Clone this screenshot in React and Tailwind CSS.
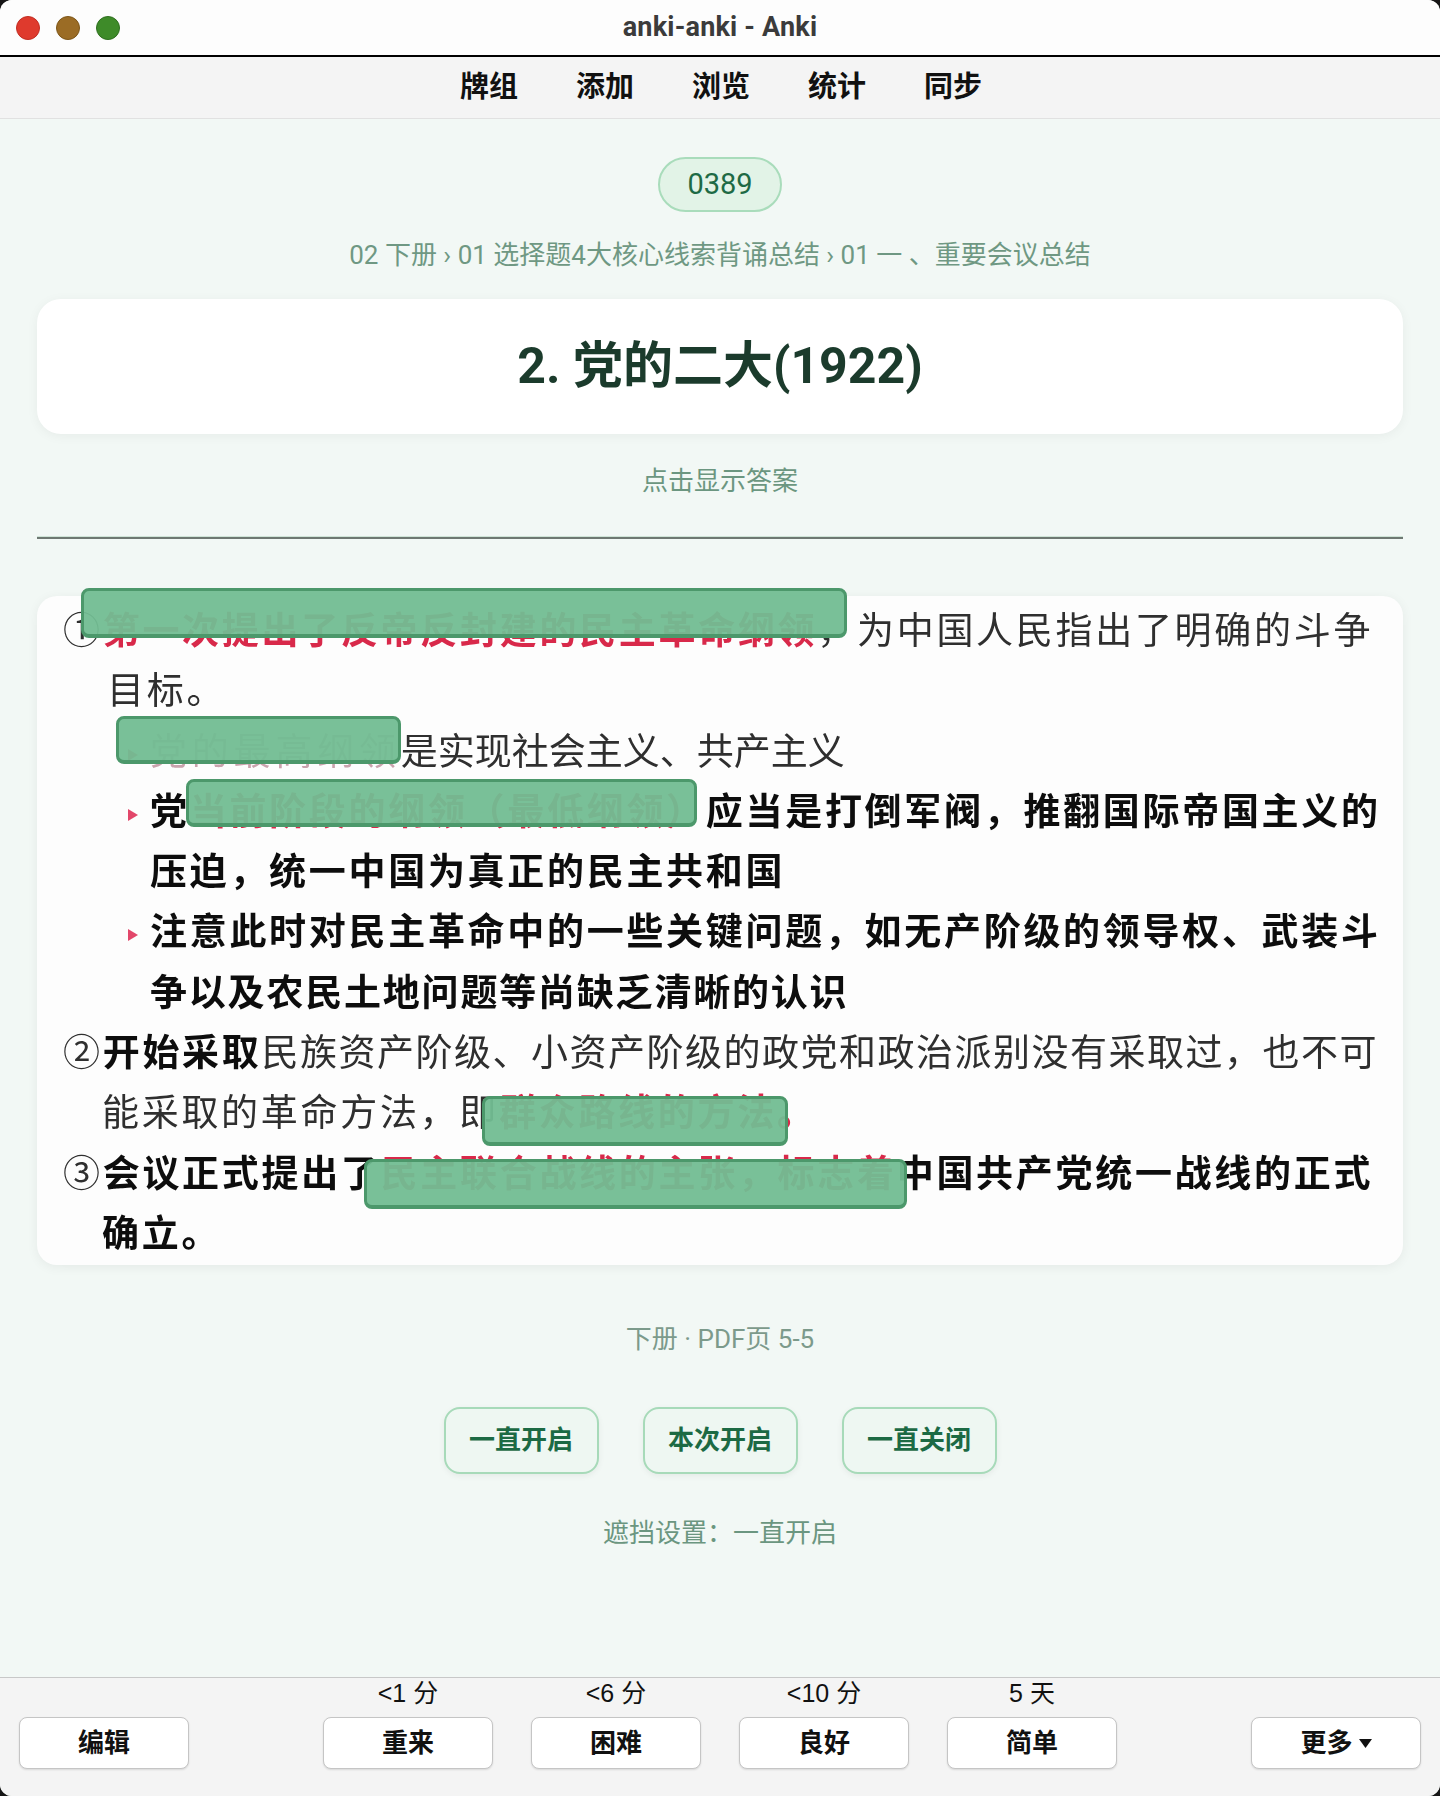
import { useMemo } from 'react';

const crumbs = ['02 下册', '01 选择题4大核心线索背诵总结', '01 一 、重要会议总结'];
const navItems = ['牌组', '添加', '浏览', '统计', '同步'];
const maskModes = ['一直开启', '本次开启', '一直关闭'];
const ratings = [
  { label: '重来', due: '<1 分' },
  { label: '困难', due: '<6 分' },
  { label: '良好', due: '<10 分' },
  { label: '简单', due: '5 天' },
];

// occlusion masks laid over the scanned note
const masks = [
  { left: 44, top: -8, width: 766, height: 50 },
  { left: 79, top: 120, width: 285, height: 48 },
  { left: 149, top: 183, width: 511, height: 48 },
  { left: 445, top: 500, width: 306, height: 50 },
  { left: 327, top: 563, width: 543, height: 50 },
];

const Arrow = () => (
  <svg width="12" height="14" viewBox="0 0 12 14" className="mr-[11px] inline-block align-middle">
    <path d="M1 1 L11 7 L1 13 Z" fill="#e2476a" />
  </svg>
);

const Line = ({ pl, children }) => (
  <div className="whitespace-nowrap" style={{ paddingLeft: pl }}>
    {children}
  </div>
);

const Red = ({ children }) => <span className="font-bold text-[#d8294a]">{children}</span>;
const Bold = ({ children }) => <span className="font-bold text-[#0d0d0d]">{children}</span>;

const ScanCard = () => (
  <div className="relative mt-[57px] w-full rounded-[20px] bg-[#fdfdfd] pb-[4px] pt-[2px] shadow-[0_2px_12px_rgba(0,0,0,0.06)]">
    <div className="font-['Noto_Sans_CJK_SC',sans-serif] text-[37px] leading-[60.3px] tracking-[2.7px] text-[#2f2f2f] blur-[0.5px]">
      <Line pl={26}>
        ①<Red>第一次提出了反帝反封建的民主革命纲领</Red>，为中国人民指出了明确的斗争
      </Line>
      <Line pl={70}>目标。</Line>
      <Line pl={90}>
        <Arrow />
        <span className="tracking-[4.8px] text-[#c9a3ad]">党的最高纲领</span>
        <span className="tracking-normal">是实现社会主义、共产主义</span>
      </Line>
      <Line pl={90}>
        <Arrow />
        <Bold>党</Bold>
        <Red>当前阶段的纲领（最低纲领）</Red>
        <Bold>应当是打倒军阀，推翻国际帝国主义的</Bold>
      </Line>
      <Line pl={113}>
        <Bold>压迫，统一中国为真正的民主共和国</Bold>
      </Line>
      <Line pl={90}>
        <Arrow />
        <Bold>注意此时对民主革命中的一些关键问题，如无产阶级的领导权、武装斗</Bold>
      </Line>
      <Line pl={113}>
        <span className="font-bold tracking-[1.8px] text-[#0d0d0d]">争以及农民土地问题等尚缺乏清晰的认识</span>
      </Line>
      <Line pl={26}>
        ②<Bold>开始采取</Bold>
        <span className="tracking-[1.5px]">民族资产阶级、小资产阶级的政党和政治派别没有采取过，也不可</span>
      </Line>
      <Line pl={65}>
        能采取的革命方法，即<Red>群众路线的方法。</Red>
      </Line>
      <Line pl={26}>
        ③<Bold>会议正式提出了</Bold>
        <Red>民主联合战线的主张，标志着</Red>
        <Bold>中国共产党统一战线的正式</Bold>
      </Line>
      <Line pl={65}>
        <Bold>确立。</Bold>
      </Line>
    </div>

    {masks.map((m, i) => (
      <div
        key={i}
        className="absolute rounded-[8px] border-[3px] border-b-[4px] border-[#4c986b] bg-[#72bd92]/95"
        style={{ left: m.left, top: m.top, width: m.width, height: m.height }}
      />
    ))}
  </div>
);

export default function App() {
  const trail = useMemo(() => crumbs.join(' › '), []);

  return (
    <div className="min-h-screen bg-[#161616] font-[Roboto,'Noto_Sans_CJK_SC',sans-serif]">
      <div className="flex h-[1796px] flex-col overflow-hidden rounded-[12px] bg-[#f2f8f5]">
        {/* title bar */}
        <div className="grid h-[57px] grid-cols-[1fr_auto_1fr] items-center border-b-2 border-black bg-[#fdfdfd]">
          <div className="flex items-center gap-[16px] pl-[16px]">
            <span className="h-[24px] w-[24px] rounded-full border border-[#c22d22] bg-[#df3a2d]" />
            <span className="h-[24px] w-[24px] rounded-full border border-[#7d5618] bg-[#9b6c25]" />
            <span className="h-[24px] w-[24px] rounded-full border border-[#2e6f1f] bg-[#3e8b29]" />
          </div>
          <div className="text-[27px] font-bold tracking-[0.2px] text-[#3b3b3b]">anki-anki - Anki</div>
          <div />
        </div>

        {/* toolbar */}
        <div className="flex h-[62px] items-center justify-center gap-[58px] border-b border-[#e1e1e1] bg-[#f4f4f4] pl-[2px]">
          {navItems.map((item) => (
            <span key={item} className="text-[29px] font-bold text-[#111]">
              {item}
            </span>
          ))}
        </div>

        {/* reviewer */}
        <div className="flex flex-1 flex-col items-center px-[37px]">
          <div className="mt-[38px] flex h-[55px] w-[124px] items-center justify-center rounded-full border-2 border-[#a9dcbb] bg-[#e2f3e7] text-[29px] text-[#1e6a45]">
            0389
          </div>
          <div className="mt-[26px] text-[26px] leading-[34px] text-[#6f9883]">{trail}</div>

          <div className="mt-[27px] flex h-[135px] w-full items-center justify-center rounded-[24px] bg-white shadow-[0_2px_12px_rgba(0,0,0,0.05)]">
            <h1 className="text-[50px] font-bold text-[#1b3b2c]">2. 党的二大(1922)</h1>
          </div>

          <div className="mt-[30px] text-[26px] leading-[34px] text-[#6b9680]">点击显示答案</div>

          <div className="mt-[38px] w-full">
            <div className="h-[1px] bg-[#cfe4d7]" />
            <div className="h-[2px] bg-[#6e7872]" />
          </div>

          <ScanCard />

          <div className="mt-[59px] text-[26px] leading-[30px] text-[#7c9a8b]">下册 · PDF页 5-5</div>

          <div className="mt-[53px] flex gap-[44px]">
            {maskModes.map((mode) => (
              <button
                key={mode}
                type="button"
                className="flex h-[67px] w-[155px] items-center justify-center rounded-[16px] border-2 border-[#a7dab9] bg-[#eef7f2] text-[26px] font-bold text-[#1c6a44] shadow-[0_2px_6px_rgba(0,0,0,0.06)]"
              >
                {mode}
              </button>
            ))}
          </div>

          <div className="mt-[42px] text-[26px] leading-[34px] text-[#6b9680]">遮挡设置：一直开启</div>
        </div>

        {/* answer buttons */}
        <div className="flex h-[119px] items-start justify-between border-t border-[#c8c8c8] bg-[#f4f4f4] px-[19px] pt-[1px] font-['Liberation_Sans','Noto_Sans_CJK_SC',sans-serif]">
          <div className="flex flex-col items-center">
            <div className="h-[28px]" />
            <button type="button" className="mt-[10px] h-[52px] w-[170px] rounded-[8px] border border-[#c5c5c5] bg-white text-[26px] font-bold text-[#111] shadow-[0_1px_2px_rgba(0,0,0,0.12)]">
              编辑
            </button>
          </div>

          <div className="flex gap-[38px]">
            {ratings.map((r) => (
              <div key={r.label} className="flex flex-col items-center">
                <div className="h-[28px] text-[25px] leading-[28px] text-[#111]">{r.due}</div>
                <button type="button" className="mt-[10px] h-[52px] w-[170px] rounded-[8px] border border-[#c5c5c5] bg-white text-[26px] font-bold text-[#111] shadow-[0_1px_2px_rgba(0,0,0,0.12)]">
                  {r.label}
                </button>
              </div>
            ))}
          </div>

          <div className="flex flex-col items-center">
            <div className="h-[28px]" />
            <button type="button" className="mt-[10px] flex h-[52px] w-[170px] items-center justify-center gap-[6px] rounded-[8px] border border-[#c5c5c5] bg-white text-[26px] font-bold text-[#111] shadow-[0_1px_2px_rgba(0,0,0,0.12)]">
              更多
              <svg width="13" height="9" viewBox="0 0 13 9">
                <path d="M0 0 H13 L6.5 9 Z" fill="#111" />
              </svg>
            </button>
          </div>
        </div>
      </div>
    </div>
  );
}
